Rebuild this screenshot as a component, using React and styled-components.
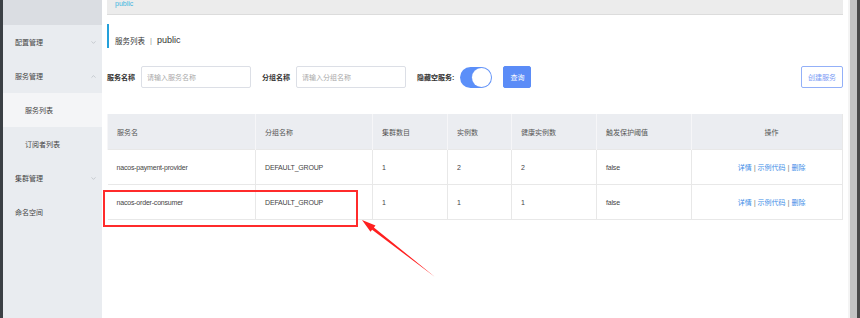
import React from "react";
import styled, { createGlobalStyle } from "styled-components";
import { ChevronDown, ChevronUp } from "lucide-react";

const latin = `"Liberation Sans", "Noto Sans CJK SC", sans-serif`;

const GlobalStyle = createGlobalStyle`
  body {
    margin: 0;
    background: #fff;
    font-family: ${latin};
    color: #333;
  }
`;

const Frame = styled.div`
  position: relative;
  display: flex;
  width: 860px;
  height: 318px;
  overflow: hidden;
`;
const EdgeStrip = styled.div`
  width: 3px;
  background: #3b4045;
`;
const Sidebar = styled.nav`
  width: 100px;
  display: flex;
  flex-direction: column;
  background: #e9ecf0;
`;
const LogoArea = styled.div`
  height: 25px;
  background: #dadde2;
`;
const MenuItem = styled.div`
  height: 34px;
  display: flex;
  align-items: center;
  justify-content: space-between;
  padding: 0 5px 0 ${(p) => (p.$sub ? 22 : 12)}px;
  font-size: 7px;
  color: #444;
  background: ${(p) => (p.$active ? "#f4f5f7" : "transparent")};
  svg {
    color: #9aa0a8;
  }
`;
const Main = styled.main`
  flex: 1;
  padding: 0 5px;
  display: flex;
  flex-direction: column;
  background: #fff;
`;
const TopBar = styled.div`
  box-sizing: border-box;
  height: 15px;
  background: #ececec;
  border-bottom: 1px solid #dcdcdc;
  overflow: hidden;
  padding-left: 8px;
  font-size: 7px;
  color: #3db6e0;
  line-height: 7px;
`;
const Title = styled.h2`
  box-sizing: border-box;
  margin: 9px 0 0;
  height: 24px;
  display: flex;
  align-items: center;
  gap: 5px;
  border-left: 2px solid #24a0da;
  padding: 8px 0 0 6px;
  font-size: 7.5px;
  font-weight: normal;
  color: #333;
`;
const Sep = styled.span`
  color: #999;
`;
const TitleNs = styled.span`
  font-size: 9px;
`;
const FilterRow = styled.div`
  margin-top: 18px;
  height: 22px;
  display: flex;
  align-items: center;
  gap: 11px;
`;
const Field = styled.label`
  display: flex;
  align-items: center;
  gap: 6px;
  font-size: 7px;
  font-weight: bold;
  color: #333;
`;
const Input = styled.input`
  box-sizing: border-box;
  width: ${(p) => p.$w}px;
  height: 22px;
  border: 1px solid #dcdfe6;
  border-radius: 2px;
  padding: 0 5px;
  font-family: ${latin};
  font-size: 7px;
  outline: none;
  &::placeholder {
    color: #aaa;
  }
`;
const Switch = styled.div`
  box-sizing: border-box;
  width: 32px;
  height: 21px;
  border-radius: 11px;
  background: #5b8ff9;
  display: flex;
  align-items: center;
  justify-content: flex-end;
  padding: 1px;
  &::after {
    content: "";
    width: 19px;
    height: 19px;
    border-radius: 50%;
    background: #fff;
    box-shadow: 0 0 0 0.5px #7aa2f7;
  }
`;
const Button = styled.button`
  box-sizing: border-box;
  height: 22px;
  padding: 0 6px;
  border-radius: 2px;
  font-family: ${latin};
  font-size: 7px;
  border: 1px solid ${(p) => (p.$outline ? "#93b0f8" : "#5b8cf7")};
  background: ${(p) => (p.$outline ? "#fff" : "#5b8cf7")};
  color: ${(p) => (p.$outline ? "#7b9cf5" : "#fff")};
  margin-left: ${(p) => (p.$push ? "auto" : "0")};
`;
const Table = styled.table`
  margin-top: 26px;
  width: 735px;
  table-layout: fixed;
  border-collapse: collapse;
  border-right: 1px solid #e8e8e8;
  border-bottom: 1px solid #e8e8e8;
`;
const Th = styled.th`
  height: 35px;
  padding: 0 0 0 9px;
  background: #ebedf1;
  border-left: 1px solid #f6f6f8;
  font-size: 7px;
  font-weight: normal;
  color: #555;
  text-align: ${(p) => (p.$center ? "center" : "left")};
`;
const Td = styled.td`
  height: 34px;
  padding: 0 0 0 9px;
  border-left: 1px solid #e8e8e8;
  border-top: 1px solid #e8e8e8;
  font-size: 7px;
  letter-spacing: -0.2px;
  color: #444;
  text-align: ${(p) => (p.$center ? "center" : "left")};
  &:first-child {
    border-left: none;
  }
`;
const Action = styled.a`
  color: #3c8ce7;
  font-size: 7px;
  letter-spacing: 0;
`;
const ActionSep = styled.span`
  color: #888;
  margin: 0 2px;
  font-size: 8px;
`;
const ScrollEdge = styled.div`
  width: 7px;
  background: #c4c4c4;
  border-left: 2px solid #f4f4f4;
  border-right: 3px solid #4a4a4a;
`;
const Highlight = styled.div`
  position: absolute;
  left: 103px;
  top: 190px;
  width: 255px;
  height: 37px;
  box-sizing: border-box;
  border: 2px solid #ff2b2b;
`;
const Arrow = styled.svg`
  position: absolute;
  left: 355px;
  top: 212px;
`;

const columns = [
  { label: "服务名", w: 148 },
  { label: "分组名称", w: 117 },
  { label: "集群数目", w: 75 },
  { label: "实例数", w: 64 },
  { label: "健康实例数", w: 85 },
  { label: "触发保护阈值", w: 95 },
  { label: "操作", w: 151, center: true },
];

const rows = [
  { name: "nacos-payment-provider", group: "DEFAULT_GROUP", clusters: 1, instances: 2, healthy: 2, threshold: "false" },
  { name: "nacos-order-consumer", group: "DEFAULT_GROUP", clusters: 1, instances: 1, healthy: 1, threshold: "false" },
];

const App = () => (
  <Frame>
    <GlobalStyle />
    <EdgeStrip />
    <Sidebar>
      <LogoArea />
      <MenuItem>
        配置管理 <ChevronDown size={7} strokeWidth={1.5} />
      </MenuItem>
      <MenuItem>
        服务管理 <ChevronUp size={7} strokeWidth={1.5} />
      </MenuItem>
      <MenuItem $sub $active>服务列表</MenuItem>
      <MenuItem $sub>订阅者列表</MenuItem>
      <MenuItem>
        集群管理 <ChevronDown size={7} strokeWidth={1.5} />
      </MenuItem>
      <MenuItem>命名空间</MenuItem>
    </Sidebar>
    <Main>
      <TopBar>public</TopBar>
      <Title>
        服务列表 <Sep>|</Sep> <TitleNs>public</TitleNs>
      </Title>
      <FilterRow>
        <Field>
          服务名称
          <Input $w={110} placeholder="请输入服务名称" />
        </Field>
        <Field>
          分组名称
          <Input $w={110} placeholder="请输入分组名称" />
        </Field>
        <Field>
          隐藏空服务:
          <Switch />
        </Field>
        <Button>查询</Button>
        <Button $outline $push>创建服务</Button>
      </FilterRow>
      <Table>
        <colgroup>
          {columns.map((c) => (
            <col key={c.label} style={{ width: c.w }} />
          ))}
        </colgroup>
        <thead>
          <tr>
            {columns.map((c) => (
              <Th key={c.label} $center={c.center}>
                {c.label}
              </Th>
            ))}
          </tr>
        </thead>
        <tbody>
          {rows.map((r) => (
            <tr key={r.name}>
              <Td>{r.name}</Td>
              <Td>{r.group}</Td>
              <Td>{r.clusters}</Td>
              <Td>{r.instances}</Td>
              <Td>{r.healthy}</Td>
              <Td>{r.threshold}</Td>
              <Td $center>
                <Action>详情</Action>
                <ActionSep>|</ActionSep>
                <Action>示例代码</Action>
                <ActionSep>|</ActionSep>
                <Action>删除</Action>
              </Td>
            </tr>
          ))}
        </tbody>
      </Table>
    </Main>
    <ScrollEdge />
    <Highlight />
    <Arrow width="85" height="70" viewBox="0 0 85 70">
      <polygon
        points="7,8 20.5,13.4 18.9,15.4 80,65 17.1,17.8 15.5,19.8"
        fill="#ff2020"
      />
    </Arrow>
  </Frame>
);

export default App;
